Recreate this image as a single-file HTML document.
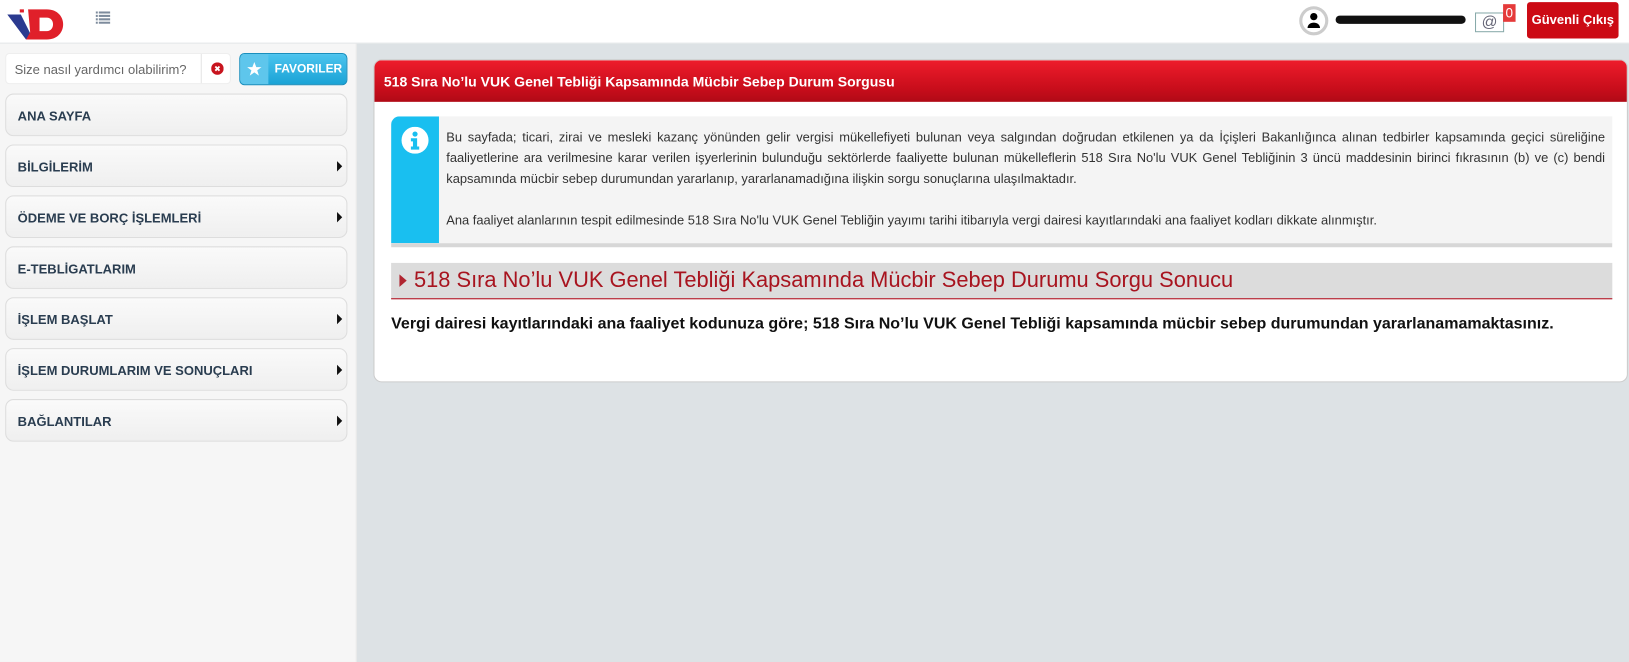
<!DOCTYPE html>
<html><head><meta charset="utf-8"><style>
*{box-sizing:border-box;margin:0;padding:0}
html,body{width:1629px;height:662px;overflow:hidden;background:#dde2e5}
#w{position:absolute;left:0;top:0;width:1566px;height:637px;transform:scale(1.0402,1.0392);transform-origin:0 0;font-family:"Liberation Sans","DejaVu Sans",sans-serif;background:#dde2e5}
.hdr{position:absolute;left:0;top:0;width:1566px;height:42px;background:#fff;border-bottom:1px solid #e3e6e8}
.side{position:absolute;left:0;top:42px;width:343px;height:595px;background:#f6f6f6;border-right:1px solid #e8e8e8}
.srch{position:absolute;left:5px;top:51px;width:217px;height:30px;background:#fff;border-radius:4px;border:1px solid #eee}
.srch span{position:absolute;left:8px;top:8px;font-size:12.5px;color:#666}
.srch .x{position:absolute;left:187px;top:0;width:30px;height:28px;border-left:1px solid #e4e4e4}
.fav{position:absolute;left:230px;top:51px;width:104px;height:31px;border-radius:5px;background:linear-gradient(#4cc4ee,#1aa3d6);border:1px solid #1a8fbd;color:#fff;font-weight:bold;font-size:11.5px}
.fav .ic{position:absolute;left:0;top:0;width:27px;height:29px;background:#5ec6ec;border-radius:4px 0 0 4px}
.mi{position:absolute;left:5px;width:329px;height:41px;border:1px solid #ddd;border-radius:8px;background:linear-gradient(#fafafa,#efefef);font-weight:bold;font-size:12.5px;color:#2a3d50;padding:14px 0 0 11px}
.mi i{position:absolute;right:4px;top:15px;width:0;height:0;border-left:5px solid #111;border-top:5px solid transparent;border-bottom:5px solid transparent}
.panel{position:absolute;left:359px;top:57px;width:1206px;height:311px;background:#fff;border:1px solid #ccc;border-radius:8px;overflow:hidden}
.ph{height:40px;background:linear-gradient(#ee1c2b,#c70d1b 70%,#b00a16);color:#fff;font-weight:bold;font-size:13.5px;padding:13px 0 0 9px}
.info{position:absolute;left:16px;top:54px;width:1174px;height:126px;background:#f4f4f4;border-bottom:4px solid #d7d7d7;border-radius:8px 0 0 0;overflow:hidden}
.info .b{position:absolute;left:0;top:0;width:46px;height:122px;background:#19bff0}
.info p{position:absolute;left:53px;font-size:12.4px;color:#333;line-height:20px;text-align:justify;width:1114px}
.sec{position:absolute;left:16px;top:195px;width:1174px;height:35px;background:#dcdcdc;border-bottom:1px solid #b20a1a;color:#a8141f;font-size:21px;padding:5px 0 0 22px}
.sec i{position:absolute;left:8px;top:11px;border-left:7px solid #b02530;border-top:6px solid transparent;border-bottom:6px solid transparent}
.res{position:absolute;left:16px;top:245px;font-weight:bold;font-size:15.4px;color:#111}
</style></head><body><div id="w">
<div class="hdr">
<svg style="position:absolute;left:7px;top:5px" width="60" height="33" viewBox="0 0 60 33"><polygon points="0,9 13,9 24,31 18,33" fill="#2b3a8f"/><path d="M20,4 H38 C59,4 59,33 38,33 H18 L22,26 Z M31,12 V25 H38 C46,25 46,12 38,12 Z" fill="#e0202a" fill-rule="evenodd"/><rect x="12" y="4" width="4" height="3" fill="#e0202a"/></svg>
<svg style="position:absolute;left:92px;top:11px" width="14" height="12"><g fill="#7d8b9c"><rect x="0" y="0" width="2" height="2"/><rect x="3" y="0" width="11" height="2"/><rect x="0" y="3.3" width="2" height="2"/><rect x="3" y="3.3" width="11" height="2"/><rect x="0" y="6.6" width="2" height="2"/><rect x="3" y="6.6" width="11" height="2"/><rect x="0" y="9.9" width="2" height="2"/><rect x="3" y="9.9" width="11" height="2"/></g></svg>
<div style="position:absolute;left:1249px;top:6px;width:28px;height:28px;border-radius:50%;border:3px solid #ccc;background:#fff"></div>
<svg style="position:absolute;left:1256px;top:12px" width="14" height="16"><circle cx="7" cy="4" r="3.5"/><path d="M1,15 C1,8 13,8 13,15 Z"/></svg>
<div style="position:absolute;left:1284px;top:15px;width:125px;height:8px;background:#111;border-radius:4px"></div>
<div style="position:absolute;left:1418px;top:12px;width:28px;height:19px;border:1px solid #8aa;font-size:15px;color:#667;text-align:center;line-height:17px">@</div>
<div style="position:absolute;left:1445px;top:4px;width:12px;height:17px;background:#e53a3a;color:#fff;font-size:13px;text-align:center;line-height:17px">0</div>
<div style="position:absolute;left:1468px;top:2px;width:88px;height:35px;background:#cc0a14;border-radius:3px;color:#fff;font-weight:bold;font-size:12.5px;text-align:center;line-height:35px">Güvenli Çıkış</div>
</div>
<div class="side"></div>
<div class="srch"><span>Size nasıl yardımcı olabilirim?</span><div class="x"><svg style="position:absolute;left:9px;top:8px" width="12" height="12"><circle cx="6" cy="6" r="6" fill="#c8141e"/><path d="M4,4 L8,8 M8,4 L4,8" stroke="#fff" stroke-width="1.8"/></svg></div></div>
<div class="fav"><div class="ic"><svg style="position:absolute;left:6px;top:7px" width="15" height="15" viewBox="0 0 24 24"><path d="M12,1 L15,9 L23,9 L16.5,14 L19,22 L12,17 L5,22 L7.5,14 L1,9 L9,9 Z" fill="#fff"/></svg></div><span style="position:absolute;left:33px;top:9px">FAVORILER</span></div>
<div class="mi" style="top:90px">ANA SAYFA</div>
<div class="mi" style="top:139px">BİLGİLERİM<i></i></div>
<div class="mi" style="top:188px">ÖDEME VE BORÇ İŞLEMLERİ<i></i></div>
<div class="mi" style="top:237px">E-TEBLİGATLARIM</div>
<div class="mi" style="top:286px">İŞLEM BAŞLAT<i></i></div>
<div class="mi" style="top:335px">İŞLEM DURUMLARIM VE SONUÇLARI<i></i></div>
<div class="mi" style="top:384px">BAĞLANTILAR<i></i></div>
<div class="panel">
<div class="ph">518 Sıra No’lu VUK Genel Tebliği Kapsamında Mücbir Sebep Durum Sorgusu</div>
<div class="info"><div class="b"><svg style="position:absolute;left:10px;top:10px" width="26" height="26" viewBox="0 0 26 26"><circle cx="13" cy="13" r="13" fill="#fff"/><circle cx="13" cy="7" r="2.5" fill="#19bff0"/><path d="M9,11 H15 V19 H17 V22 H9 V19 H11 V14 H9 Z" fill="#19bff0"/></svg></div>
<p style="top:10px">Bu sayfada; ticari, zirai ve mesleki kazanç yönünden gelir vergisi mükellefiyeti bulunan veya salgından doğrudan etkilenen ya da İçişleri Bakanlığınca alınan tedbirler kapsamında geçici süreliğine faaliyetlerine ara verilmesine karar verilen işyerlerinin bulunduğu sektörlerde faaliyette bulunan mükelleflerin 518 Sıra No'lu VUK Genel Tebliğinin 3 üncü maddesinin birinci fıkrasının (b) ve (c) bendi kapsamında mücbir sebep durumundan yararlanıp, yararlanamadığına ilişkin sorgu sonuçlarına ulaşılmaktadır.</p>
<p style="top:90px">Ana faaliyet alanlarının tespit edilmesinde 518 Sıra No'lu VUK Genel Tebliğin yayımı tarihi itibarıyla vergi dairesi kayıtlarındaki ana faaliyet kodları dikkate alınmıştır.</p></div>
<div class="sec"><i></i>518 Sıra No’lu VUK Genel Tebliği Kapsamında Mücbir Sebep Durumu Sorgu Sonucu</div>
<div class="res">Vergi dairesi kayıtlarındaki ana faaliyet kodunuza göre; 518 Sıra No’lu VUK Genel Tebliği kapsamında mücbir sebep durumundan yararlanamamaktasınız.</div>
</div>
</div></body></html>
